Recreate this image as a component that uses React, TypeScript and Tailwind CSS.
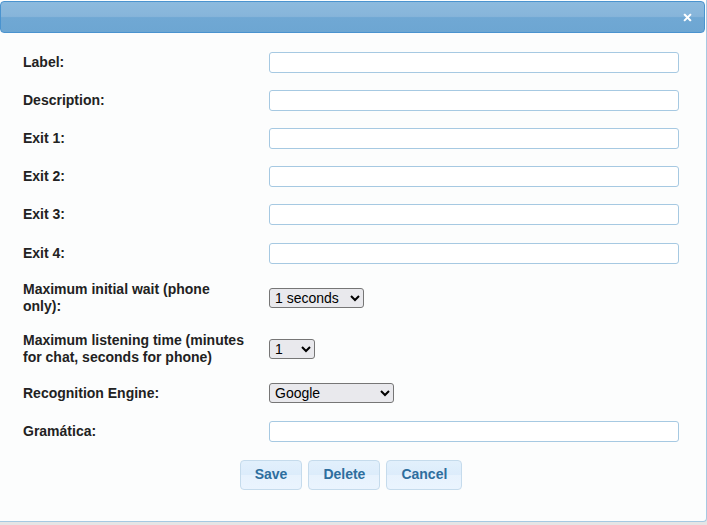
import React from "react";

const font = { fontFamily: '"Liberation Sans", Arial, sans-serif' };

function Row({ label, h, children }: { label: React.ReactNode; h: string; children: React.ReactNode }) {
  return (
    <div className={`flex items-center ${h}`}>
      <div className="w-[225px] mr-[21px] text-[14px] leading-[17px] font-bold text-[#222222]">{label}</div>
      <div className="flex items-center">{children}</div>
    </div>
  );
}

function TextInput() {
  return <input type="text" className="w-[410px] h-[21px] border border-[#a6c9e2] rounded-[3px] bg-white px-1 text-[13px]" />;
}

function Sel({ w, options }: { w: string; options: string[] }) {
  return (
    <select
      className={`${w} h-[20px] border border-[#767676] rounded-[3px] bg-[#e9e9ed] text-[14px] leading-[16px] text-black pl-[1px]`}
      style={font}
      defaultValue={options[0]}
    >
      {options.map((o) => (
        <option key={o}>{o}</option>
      ))}
    </select>
  );
}

function Btn({ children }: { children: React.ReactNode }) {
  return (
    <button className="h-[30px] px-[14px] border border-[#c5dbec] rounded-[4px] bg-[linear-gradient(#e2f0fc,#dcecfb_50%,#e7f2fd_50%,#eaf4fe)] text-[14px] font-bold text-[#2e6e9e]">
      {children}
    </button>
  );
}

export default function App() {
  return (
    <div className="w-[707px] h-[525px] bg-[#e5e5e5] overflow-hidden" style={font}>
      <div className="w-[707px] h-[522px] border-b border-r border-[#a6c9e2] rounded-br-[4px] bg-[#fcfdfd] flex flex-col">
        <div className="mt-[1px] h-[32px] w-[705px] border border-[#4a93cf] rounded-[4px] bg-[linear-gradient(#8cbade,#87b5da_48%,#70a8d4_52%,#6da6d2)] flex items-center justify-end pr-[12px]">
          <svg width="9" height="9" viewBox="0 0 9 9">
            <path d="M1.8 1.8 L7.2 7.2 M7.2 1.8 L1.8 7.2" stroke="#ffffff" strokeWidth="2" strokeLinecap="square" />
          </svg>
        </div>
        <div className="pl-[23px] pt-[10px] flex flex-col">
          <Row label="Label:" h="h-[38.2px]"><TextInput /></Row>
          <Row label="Description:" h="h-[38.2px]"><TextInput /></Row>
          <Row label="Exit 1:" h="h-[38.2px]"><TextInput /></Row>
          <Row label="Exit 2:" h="h-[38.2px]"><TextInput /></Row>
          <Row label="Exit 3:" h="h-[38.2px]"><TextInput /></Row>
          <Row label="Exit 4:" h="h-[38.2px]"><TextInput /></Row>
          <Row label="Maximum initial wait (phone only):" h="h-[51px]">
            <Sel w="w-[95px]" options={["1 seconds", "2 seconds", "3 seconds"]} />
          </Row>
          <Row label="Maximum listening time (minutes for chat, seconds for phone)" h="h-[51px]">
            <Sel w="w-[46px]" options={["1", "2", "3"]} />
          </Row>
          <Row label="Recognition Engine:" h="h-[38.2px]">
            <Sel w="w-[125px]" options={["Google", "Microsoft"]} />
          </Row>
          <Row label="Gramática:" h="h-[38.2px]"><TextInput /></Row>
        </div>
        <div className="mt-[9px] flex justify-center gap-[6px] pr-[4px]">
          <Btn>Save</Btn>
          <Btn>Delete</Btn>
          <Btn>Cancel</Btn>
        </div>
      </div>
    </div>
  );
}
